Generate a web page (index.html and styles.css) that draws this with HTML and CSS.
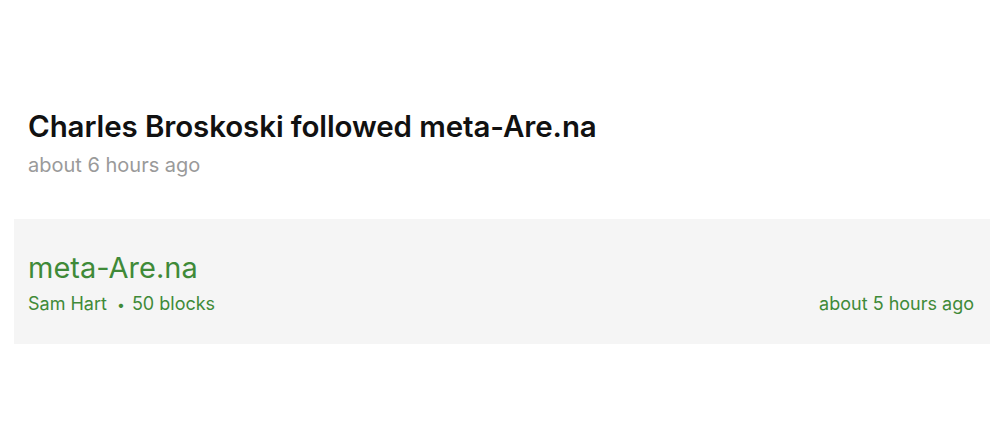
FILE: index.html
```html
<!DOCTYPE html>
<html lang="en">
<head>
    <meta charset="UTF-8">
    <meta name="viewport" content="width=device-width, initial-scale=1.0">
    <title>Activity</title>
    <link rel="stylesheet" href="styles.css">
</head>
<body>
    <div class="story">
        <h1 class="story-title">Charles Broskoski followed meta-Are.na</h1>
        <p class="story-time">about 6 hours ago</p>
    </div>

    <!-- Channel card -->
    <div class="channel">
        <div class="channel-title">meta-Are.na</div>
        <div class="channel-meta">
            <span>Sam Hart <span class="dot">&bull;</span> 50 blocks</span>
            <span>about 5 hours ago</span>
        </div>
    </div>
</body>
</html>
```

FILE: styles.css
```css
body {
    font-family: Inter, "Noto Sans", sans-serif;
    background-color: #fff;
    color: #111;
    margin: 0;
    padding: 0;
}
.story {
    padding: 108px 28px 0 28px;
}
.story-title {
    margin: 0;
    font-size: 29.5px;
    font-weight: 600;
    line-height: 36px;
    letter-spacing: -0.1px;
}
.story-time {
    margin: 8px 0 0 0;
    font-size: 20px;
    line-height: 26px;
    color: #9a9a9a;
}
/* Box for the channel */
.channel {
    margin: 41px 10px 0 14px;
    padding: 32px 16px 27px 14px;
    background-color: #f5f5f5;
    color: #3f8a38;
}
.channel-title {
    font-size: 29px;
    line-height: 34px;
}
.channel-meta {
    display: flex;
    justify-content: space-between;
    margin-top: 7px;
    font-size: 18px;
    line-height: 24px;
}
.dot {
    font-size: 14px;
    margin: 0 2px 0 5px;
}
```
